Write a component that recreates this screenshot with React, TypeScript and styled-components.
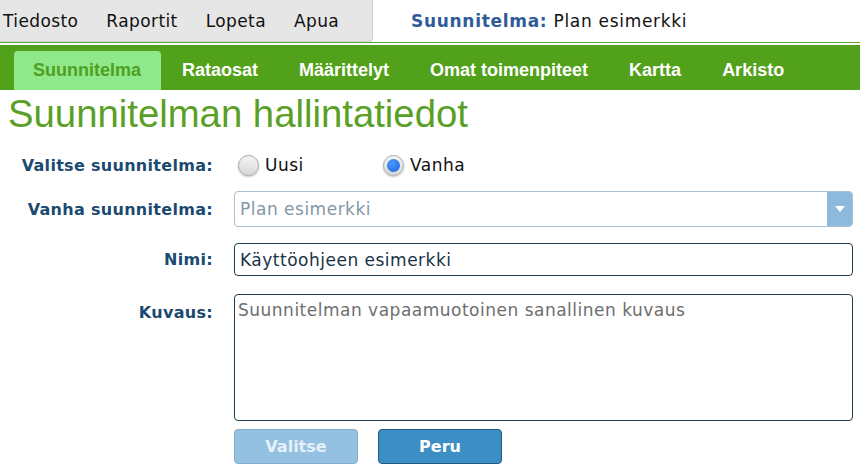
import styled, { createGlobalStyle } from 'styled-components';
import { useState } from 'react';

const GlobalStyle = createGlobalStyle`
  html, body {
    margin: 0;
    padding: 0;
    background: #ffffff;
  }
  * {
    box-sizing: border-box;
  }
`;

const tabs = ['Suunnitelma', 'Rataosat', 'Määrittelyt', 'Omat toimenpiteet', 'Kartta', 'Arkisto'];
const menus = ['Tiedosto', 'Raportit', 'Lopeta', 'Apua'];

export default function App() {
  const [tab, setTab] = useState('Suunnitelma');
  const [choice, setChoice] = useState('Vanha');

  return (
    <Page>
      <GlobalStyle />
      <TopBar>
        <MenuBar>
          {menus.map((m) => (
            <MenuItem key={m}>{m}</MenuItem>
          ))}
        </MenuBar>
        <PlanTitle>
          <b>Suunnitelma:</b> Plan esimerkki
        </PlanTitle>
      </TopBar>
      <TabBand>
        {tabs.map((t) => (
          <Tab key={t} $active={tab === t} onClick={() => setTab(t)}>
            {t}
          </Tab>
        ))}
      </TabBand>
      <Heading>Suunnitelman hallintatiedot</Heading>
      <Form>
        <Row $top={14} $align='center'>
          <Label>Valitse suunnitelma:</Label>
          <RadioGroup>
            <RadioOption $width={145} onClick={() => setChoice('Uusi')}>
              <RadioDot $checked={choice === 'Uusi'} />
              Uusi
            </RadioOption>
            <RadioOption $width={120} onClick={() => setChoice('Vanha')}>
              <RadioDot $checked={choice === 'Vanha'} />
              Vanha
            </RadioOption>
          </RadioGroup>
        </Row>
        <Row $top={11} $align='center'>
          <Label>Vanha suunnitelma:</Label>
          <Select>
            <SelectText>Plan esimerkki</SelectText>
            <SelectArrow>
              <svg width='10' height='6' viewBox='0 0 10 6'>
                <path d='M0 0 L10 0 L5 6 Z' fill='#ffffff' />
              </svg>
            </SelectArrow>
          </Select>
        </Row>
        <Row $top={16} $align='center'>
          <Label>Nimi:</Label>
          <TextInput defaultValue='Käyttöohjeen esimerkki' />
        </Row>
        <Row $top={18} $align='start'>
          <Label $pad={9}>Kuvaus:</Label>
          <TextArea defaultValue='Suunnitelman vapaamuotoinen sanallinen kuvaus' />
        </Row>
        <Row $top={8} $align='start'>
          <span />
          <Buttons>
            <Button $variant='disabled' disabled>
              Valitse
            </Button>
            <Button $variant='primary'>Peru</Button>
          </Buttons>
        </Row>
      </Form>
    </Page>
  );
}

const Page = styled.div`
  width: 860px;
  font-family: 'DejaVu Sans', Verdana, sans-serif;
`;

const TopBar = styled.div`
  display: flex;
  align-items: center;
  height: 42px;
`;

const MenuBar = styled.div`
  display: flex;
  align-items: center;
  width: 373px;
  height: 42px;
  padding-left: 3px;
  gap: 28px;
  background: #e6e6e6;
  border-right: 1px solid #d2d2d2;
  border-bottom: 1px solid #d2d2d2;
  border-bottom-right-radius: 4px;
`;

const MenuItem = styled.span`
  font-size: 17px;
  letter-spacing: 0.4px;
  color: #111111;
  cursor: pointer;
`;

const PlanTitle = styled.div`
  margin-left: 38px;
  font-size: 17px;
  letter-spacing: 0.7px;
  color: #111111;

  b {
    color: #2f5b98;
  }
`;

const TabBand = styled.div`
  display: flex;
  align-items: flex-end;
  height: 48px;
  padding-left: 14px;
  border-top: 1px solid #5ba52a;
  background: linear-gradient(#ffffff 0 2px, #52a11a 2px);
`;

const Tab = styled.div<{ $active: boolean }>`
  display: flex;
  align-items: center;
  height: 39px;
  padding: 0 20px 0 19px;
  margin-right: 2px;
  font-family: 'Liberation Sans', Arial, sans-serif;
  font-weight: bold;
  font-size: 18px;
  color: ${(p) => (p.$active ? '#4f9f22' : '#ffffff')};
  background: ${(p) => (p.$active ? '#8fe98a' : 'transparent')};
  border-radius: 4px 4px 0 0;
  cursor: pointer;
`;

const Heading = styled.h1`
  margin: 2px 0 0 8px;
  font-family: 'Liberation Sans', Arial, sans-serif;
  font-weight: normal;
  font-size: 38.3px;
  line-height: 44px;
  color: #5a9f26;
`;

const Form = styled.div`
  display: flex;
  flex-direction: column;
  padding-right: 7px;
`;

const Row = styled.div<{ $top: number; $align: string }>`
  display: grid;
  grid-template-columns: 213px 1fr;
  column-gap: 21px;
  align-items: ${(p) => p.$align};
  margin-top: ${(p) => p.$top}px;
`;

const Label = styled.label<{ $pad?: number }>`
  text-align: right;
  font-weight: bold;
  font-size: 16px;
  letter-spacing: 0.3px;
  color: #1b4a70;
  padding-top: ${(p) => p.$pad ?? 0}px;
`;

const RadioGroup = styled.div`
  display: flex;
  align-items: center;
  height: 30px;
  padding-left: 4px;
`;

const RadioOption = styled.div<{ $width: number }>`
  display: flex;
  align-items: center;
  gap: 6px;
  width: ${(p) => p.$width}px;
  font-size: 17px;
  letter-spacing: 0.5px;
  color: #111111;
  cursor: pointer;
`;

const RadioDot = styled.span<{ $checked: boolean }>`
  position: relative;
  width: 21px;
  height: 21px;
  border-radius: 50%;
  border: 1px solid #a9a9a9;
  background: linear-gradient(#f4f4f4, #d8d8d8);
  box-shadow: 0 1px 2px rgba(0, 0, 0, 0.25);

  &::after {
    content: '';
    display: ${(p) => (p.$checked ? 'block' : 'none')};
    position: absolute;
    top: 3px;
    left: 3px;
    width: 13px;
    height: 13px;
    border-radius: 50%;
    background: radial-gradient(circle at 40% 35%, #4c9bff, #1463e0);
  }
`;

const Select = styled.div`
  display: flex;
  height: 36px;
  border: 1px solid #a9c1d3;
  border-radius: 4px;
  overflow: hidden;
`;

const SelectText = styled.div`
  flex: 1;
  display: flex;
  align-items: center;
  padding-left: 5px;
  font-size: 17px;
  letter-spacing: 0.5px;
  color: #8397a6;
`;

const SelectArrow = styled.div`
  display: flex;
  align-items: center;
  justify-content: center;
  width: 25px;
  background: #8db9dc;
`;

const TextInput = styled.input`
  height: 33px;
  padding: 0 5px;
  border: 1px solid #1f3d51;
  border-radius: 4px;
  font-family: 'DejaVu Sans', Verdana, sans-serif;
  font-size: 17px;
  letter-spacing: 0.5px;
  color: #1a3346;
  outline: none;
`;

const TextArea = styled.textarea`
  height: 127px;
  padding: 4px 3px 2px;
  border: 1px solid #1f3d51;
  border-radius: 4px;
  font-family: 'DejaVu Sans', Verdana, sans-serif;
  font-size: 17px;
  letter-spacing: 0.5px;
  line-height: 22px;
  color: #6e6e6e;
  resize: none;
  outline: none;
`;

const Buttons = styled.div`
  display: flex;
  gap: 20px;
`;

const Button = styled.button<{ $variant: 'primary' | 'disabled' }>`
  width: 124px;
  height: 35px;
  border-radius: 4px;
  font-family: 'DejaVu Sans', Verdana, sans-serif;
  font-weight: bold;
  font-size: 16px;
  color: ${(p) => (p.$variant === 'primary' ? '#ffffff' : '#e6f0f8')};
  background: ${(p) => (p.$variant === 'primary' ? '#3e8ec6' : '#94c1e2')};
  border: 1px solid ${(p) => (p.$variant === 'primary' ? '#1f5a86' : '#86aecb')};
  cursor: pointer;
`;
